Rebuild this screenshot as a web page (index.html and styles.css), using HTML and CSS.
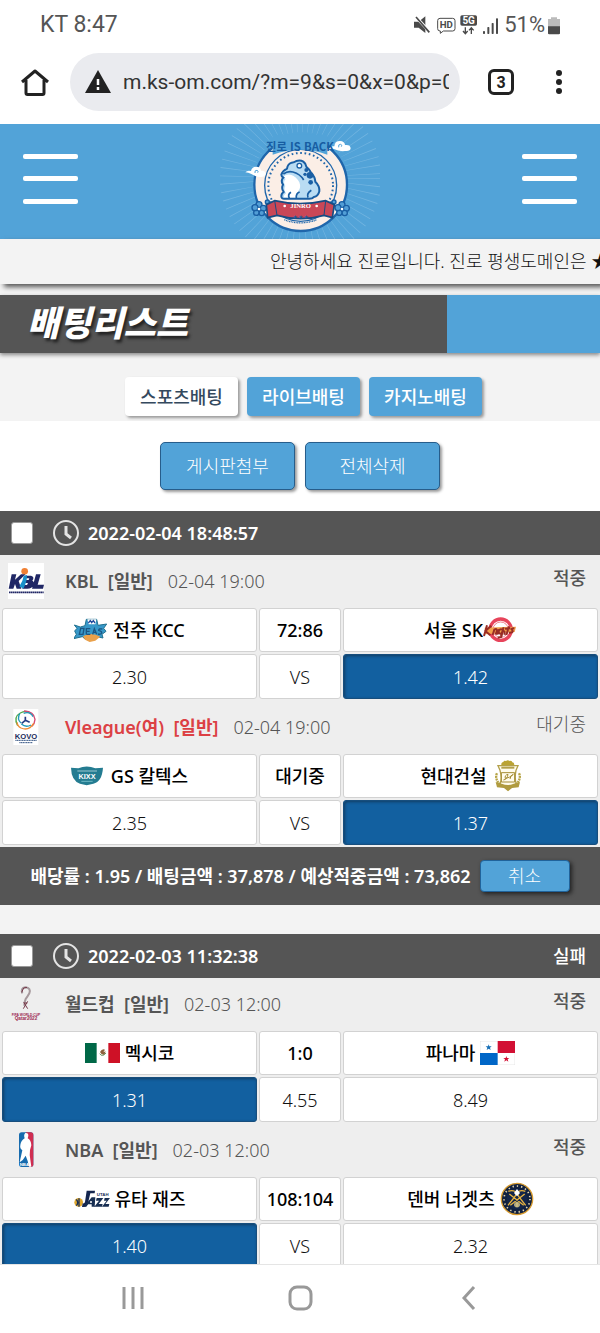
FILE: index.html
```
<!DOCTYPE html>
<html lang="ko">
<head>
  <meta charset="UTF-8">
  <title>배팅리스트</title>
  <meta name="viewport" content="width=device-width, initial-scale=1.0">
  <link rel="stylesheet" href="styles.css">
</head>
<body>
  <!-- 상태바 -->
  <div class="status-bar">
    <span>KT 8:47</span>
    <div class="status-icons">
      <svg width="88" height="20" viewBox="333 42 264 60">
        <g fill="#4a4a4a">
          <path d="M336 62h14l20-16v50l-20-16h-14z"/>
          <path d="M340 46l44 48" stroke="#fff" stroke-width="9"/>
          <path d="M342 48l40 46" stroke="#4a4a4a" stroke-width="5"/>
          <path d="M414 52h38q7 0 7 7v24q0 7-7 7h-28l-9 7v-7h-1q-7 0-7-7v-24q0-7 7-7z" fill="none" stroke="#4a4a4a" stroke-width="3"/>
          <rect x="475" y="43" width="50" height="31" rx="5"/>
          <path d="M490 79v18m-7-7l7 8 7-8M508 99v-18m-7 7l7-8 7 8" fill="none" stroke="#4a4a4a" stroke-width="4"/>
          <rect x="543" y="90" width="6" height="9" rx="2"/>
          <rect x="556" y="78" width="6" height="21" rx="2"/>
          <rect x="569" y="66" width="6" height="33" rx="2"/>
          <rect x="582" y="52" width="6" height="47" rx="2"/>
        </g>
        <text x="433" y="81" class="hd">HD</text>
        <text x="500" y="69" class="fiveg">5G</text>
      </svg>
      <span class="percent">51%</span>
      <svg width="12" height="19" viewBox="0 0 36 57">
        <path d="M9 4h18v5h9v45H0V9h9z" fill="#bbb"/>
        <path d="M0 31h36v20q0 4-4 4H4q-4 0-4-4z" fill="#4a4a4a"/>
      </svg>
    </div>
  </div>

  <!-- 브라우저 주소창 -->
  <div class="browser-bar">
    <button class="icon-btn" aria-label="홈">
      <svg width="28" height="28" viewBox="0 0 28 28" fill="none" stroke="#222" stroke-width="3" stroke-linejoin="round">
        <path d="M1 14L14 3l13 11M5 12v13q0 1.500 1.500 1.500h15q1.500 0 1.500-1.500V12"/>
      </svg>
    </button>
    <label class="address">
      <svg width="26" height="24" viewBox="0 0 26 24">
        <path d="M13 0l13 23H0z" fill="#222"/>
        <path d="M13 9v6M13 17v3" stroke="#fff" stroke-width="2.500"/>
      </svg>
      <input type="text" value="m.ks-om.com/?m=9&amp;s=0&amp;x=0&amp;p=0" aria-label="주소">
    </label>
    <button class="tab-count">3</button>
    <button class="icon-btn more" aria-label="메뉴">
      <svg width="8" height="26" viewBox="0 0 8 26" fill="#222"><circle cx="4" cy="4" r="3"/><circle cx="4" cy="13" r="3"/><circle cx="4" cy="22" r="3"/></svg>
    </button>
  </div>

  <main>
    <header>
      <button class="menu-btn" aria-label="왼쪽 메뉴"><i></i><i></i><i></i></button>
      <a href="#" class="logo" aria-label="진로 IS BACK">
        <svg width="160" height="115" viewBox="0 6 480 345">
          <circle cx="242" cy="168" r="190" fill="none" stroke="#86c0e6" stroke-width="105" stroke-dasharray="2 18" opacity=".6"/>
          <circle cx="242" cy="188" r="139" fill="#fbeee6" stroke="#1f66ab" stroke-width="7"/>
          <circle cx="242" cy="190" r="108" fill="#fbeee6" stroke="#1f66ab" stroke-width="4"/>
          <circle cx="242" cy="190" r="97" fill="none" stroke="#1f66ab" stroke-width="6" stroke-dasharray="5 8"/>
          <path d="M158 38h164v60q-80-30-164 0z" fill="#52a3d8"/>
          <g class="cloud">
            <path d="M326 80q4-9 17-7 1-16 17-16 14 1 15 12 16-2 17 10-1 10-17 8-19 2-33-6z"/>
            <path d="M76 151q6-7 17-4 2-13 16-13 13 0 14 12 14-1 14 10-2 9-15 9-13 0-28-9-9-5-18-5z"/>
            <path d="M356 76q-2-10 6-9 6 2 2 7M105 153q-2-9 6-8 6 2 2 7" fill="none" stroke="#52a3d8" stroke-width="3"/>
          </g>
          <!-- 두꺼비 -->
          <path d="M184 158q4-12 17-18 2-14 14-18 8-1 14-5 12-4 21 2 8 6 9 15 10 8 14 18 12 12 13 27 13 12 12 29-4 16-16 17-7 7-19 5h-69q-10 1-10-7 0-9 7-13-8-12-2-22-8-12 1-21-6-4-6-9z" fill="#b9dcf3"/>
          <path d="M190 165q10-10 24-6 14 4 24 22 6 16-3 26-7 8-6 20h-38q0-9 7-13-8-12-2-22-8-12 1-21z" fill="#fff"/>
          <path d="M184 158q4-12 17-18 2-14 14-18 8-1 14-5 12-4 21 2 8 6 9 15 10 8 14 18 12 12 13 27 13 12 12 29-4 16-16 17-7 7-19 5h-69q-10 1-10-7 0-9 7-13-8-12-2-22-8-12 1-21-6-4-6-9z" fill="none" stroke="#1a5fa4" stroke-width="6"/>
          <path d="M190 156q13-10 29-6 22 6 32 24M208 229q-6-12 5-18M229 229q-2-15 10-19M264 227q-5-13 10-22" fill="none" stroke="#1a5fa4" stroke-width="5"/>
          <g fill="#1a5fa4"><circle cx="259" cy="144" r="6"/><circle cx="270" cy="160" r="10"/><circle cx="272" cy="181" r="7"/><circle cx="255" cy="157" r="5"/></g>
          <circle cx="238" cy="131" r="7" fill="#fff" stroke="#1a5fa4" stroke-width="4"/>
          <g fill="#529ed6" stroke="#195ea3" stroke-width="4">
            <circle cx="117" cy="248" r="9"/><circle cx="130" cy="259" r="9"/><circle cx="125" cy="273" r="8"/><circle cx="109" cy="272" r="8"/><circle cx="105" cy="257" r="9"/><circle cx="151" cy="247" r="7"/><circle cx="142" cy="240" r="6"/>
            <circle cx="366" cy="248" r="9"/><circle cx="379" cy="259" r="9"/><circle cx="374" cy="273" r="8"/><circle cx="358" cy="272" r="8"/><circle cx="354" cy="257" r="9"/><circle cx="334" cy="247" r="7"/><circle cx="342" cy="240" r="6"/>
          </g>
          <circle cx="117" cy="261" r="4" fill="#fff"/><circle cx="366" cy="261" r="4" fill="#fff"/>
          <path d="M139 248l25-12q76 18 153 0l26 12-6 39-25-7q-70 20-141 0l-28 7z" fill="#c94757" stroke="#174c83" stroke-width="5"/>
          <path d="M164 236l7 44M317 236l-5 44" stroke="#174c83" stroke-width="3"/>
          <circle cx="194" cy="252" r="4" fill="#fff"/><circle cx="290" cy="252" r="4" fill="#fff"/>
          <text x="242" y="259" class="logo-ribbon">JINRO</text>
          <path d="M193 293q48 19 98 0" fill="none" stroke="#1f66ab" stroke-width="4" stroke-dasharray="3 2"/>
          <text x="242" y="288" class="logo-stars">★ ★ ★</text>
          <text x="240" y="86" class="logo-title">진로 IS BACK</text>
        </svg>
      </a>
      <button class="menu-btn" aria-label="오른쪽 메뉴"><i></i><i></i><i></i></button>
    </header>

    <div class="notice">안녕하세요 진로입니다. 진로 평생도메인은 ★</div>
    <div class="page-title"><h1>배팅리스트</h1></div>

    <nav class="tabs">
      <button class="active">스포츠배팅</button>
      <button>라이브배팅</button>
      <button>카지노배팅</button>
    </nav>
    <div class="actions">
      <button>게시판첨부</button>
      <button>전체삭제</button>
    </div>

    <!-- 배팅 1 -->
    <section class="bet">
      <div class="bet-head">
        <input type="checkbox" id="bet1">
        <label for="bet1">
          <svg width="28" height="28" viewBox="0 0 28 28" fill="none" stroke="#e4e4e4" stroke-width="2"><circle cx="14" cy="14" r="12"/><path d="M14 7v8l5 4" stroke-width="3"/></svg>
          2022-02-04 18:48:57
        </label>
      </div>
      <div class="league">
        <svg class="league-icon" width="36" height="36" viewBox="23 399 108 108">
          <path d="M23 399h108v108H23z" fill="#fff"/>
          <circle cx="73" cy="424" r="10" fill="#f08034"/>
          <path d="M34 433h14l-4 16 18-16h13l-20 20 8 23H49l-5-14-5 14H25zM71 437h21q12 3 4 15 8 4 2 15-4 9-17 9H66l3-11h11l3-6H68l2-9h15l2-5H75zM107 433h14l-9 31h19l-3 12h-33z" fill="#202765"/>
          <path d="M57 469q11-15 13-31l10-3q0 22-11 41z" fill="#1890c9"/>
          <path d="M26 487h104" stroke="#202765" stroke-width="5" stroke-dasharray="5 1"/>
        </svg>
        <b>KBL&nbsp; [일반]</b><time>02-04 19:00</time>
        <strong class="state">적중</strong>
      </div>
      <table>
        <colgroup><col><col class="mid"><col></colgroup>
        <tr>
          <th><span class="team">
            <svg width="34" height="24" viewBox="221 568 102 72">
              <path d="M222 589l18 6 14-4 4-19h31l4 18 26-4-9 13 7 9-12 9 3 11-26-6q-12 16-28 9l-8-7-26 6 8-13-5-10 7-8z" fill="#3798c9" stroke="#22718f" stroke-width="3"/>
              <path d="M248 623q25-14 52 1l-15 12-17 4-14-7z" fill="#eaa14b"/>
              <path d="M261 572h27l-3 15h-20z" fill="#fff"/><path d="M264 583l6-7 4 6 5-6 5 7" fill="none" stroke="#22499b" stroke-width="4"/>
              <path d="M237 617l4-18h10l-3 18zM258 617v-17h12m-12 8h10m-10 9h12M277 617l5-17 7 17m-9-6h6M306 601q-11-2-11 4 12 3 8 9-3 4-10 2" fill="none" stroke="#1c5683" stroke-width="4"/>
            </svg>전주 KCC</span></th>
          <th>72:86</th>
          <th><span class="team tight">서울 SK<svg width="34" height="26" viewBox="545 565 102 78">
              <circle cx="598" cy="603" r="32" fill="#fff" stroke="#e7445b" stroke-width="10"/><circle cx="598" cy="603" r="23" fill="none" stroke="#e7445b" stroke-width="2"/>
              <path d="M550 597l94-3-4 16-88 7z" fill="#f3a04c"/>
              <path d="M557 590l-9 32m22-31l-18 16 15 13m7-1l5-16q8-5 8 3l-4 12m10-16l-5 16m16-15q-11-4-12 7 3 9 11 2l-3 13-11 2m18-31l-8 27m1-10q13-13 9 5m14-25l-8 26m-4-19l16-1m12 0q-13 0-6 6 5 7-10 7" fill="none" stroke="#992c25" stroke-width="6"/>
            </svg></span></th>
        </tr>
        <tr><td>2.30</td><td>VS</td><td class="pick">1.42</td></tr>
      </table>
      <div class="league">
        <svg class="league-icon" width="36" height="36" viewBox="23 175 108 108">
          <path d="M39 175h75v108H39z" fill="#fff"/>
          <g fill="none" stroke-width="4">
            <path d="M52 225q-14-26 8-38 14-8 27-2" stroke="#54a94b"/><path d="M71 181q30 1 33 25-1 13-9 21" stroke="#d54972"/>
            <path d="M100 218q-14 24-38 14-11-6-12-17" stroke="#f08c35"/><path d="M58 189q-9 17 4 28m8-29q19-7 28 10m-6 25q-15 9-29-3" stroke="#219aba"/>
            <path d="M75 198v11l-11 9m11-9l13 6" stroke="#263d83" stroke-width="5"/>
          </g>
          <text x="77" y="264" class="kovo">KOVO</text>
          <path d="M45 269h65M57 276h40" stroke="#315181" stroke-width="3" stroke-dasharray="4 1"/>
        </svg>
        <b class="red">Vleague(여)&nbsp; [일반]</b><time>02-04 19:00</time>
        <span class="state">대기중</span>
      </div>
      <table>
        <colgroup><col><col class="mid"><col></colgroup>
        <tr>
          <th><span class="team wide">
            <svg width="32" height="20" viewBox="215 352 96 60">
              <path d="M215 357l22 2q25-11 51 0l23-2q-3 42-29 48l-20 5-20-5q-26-9-27-48z" fill="#247c91"/>
              <path d="M234 367h59" stroke="#d8eef1" stroke-width="2"/><text x="263" y="391" class="kixx">KIXX</text>
              <path d="M246 398h34" stroke="#6eb8c5" stroke-width="3"/>
            </svg>GS 칼텍스</span></th>
          <th>대기중</th>
          <th><span class="team wide">현대건설
            <svg width="26" height="32" viewBox="582 338 78 96">
              <path d="M601 355q-1-11 6-11 2-6 8-3 5-5 11 0 7-2 8 4 7 0 6 10z" fill="#baa334"/>
              <path d="M591 355h60l-6 14q-5 24 1 42l-25 15-24-15q7-18 0-42z" fill="#fffced" stroke="#b3a04a" stroke-width="4"/>
              <path d="M601 361h39" stroke="#b3a04a" stroke-width="6"/>
              <path d="M601 376h40v28h-40zM607 398q12-2 14-17-11 2-8 13 13-3 24-13-9 3-10 14" fill="none" stroke="#a58d35" stroke-width="3"/>
              <path d="M588 378q-8 16 9 33M654 378q8 16-9 33" fill="none" stroke="#b7a548" stroke-width="7" stroke-dasharray="6 2"/>
              <path d="M584 404l18 5q19 8 36 0l19-5-4 16-20 2-12 10-12-10-21-2z" fill="#b09b3f"/>
            </svg></span></th>
        </tr>
        <tr><td>2.35</td><td>VS</td><td class="pick">1.37</td></tr>
      </table>
      <div class="bet-foot">
        <span>배당률 : 1.95 / 배팅금액 : 37,878 / 예상적중금액 : 73,862</span>
        <button>취소</button>
      </div>
    </section>

    <!-- 배팅 2 -->
    <section class="bet">
      <div class="bet-head">
        <input type="checkbox" id="bet2">
        <label for="bet2">
          <svg width="28" height="28" viewBox="0 0 28 28" fill="none" stroke="#e4e4e4" stroke-width="2"><circle cx="14" cy="14" r="12"/><path d="M14 7v8l5 4" stroke-width="3"/></svg>
          2022-02-03 11:32:38
        </label>
        <strong class="result">실패</strong>
      </div>
      <div class="league">
        <svg class="league-icon" width="36" height="36" viewBox="23 184 108 108">
          <path d="M66 206q-6-16 9-18 18 2 12 18-6 11-11 17-4 9-4 20" fill="none" stroke="#a6999d" stroke-width="6"/>
          <path d="M64 203l6-13 10-2M70 233l12 19m0-22l-13 22m2-17h10" stroke="#763849" stroke-width="3" fill="none"/>
          <text x="77" y="273" class="fifa">FIFA WORLD CUP</text><text x="77" y="286" class="qatar">Qatar2022</text>
        </svg>
        <b>월드컵&nbsp; [일반]</b><time>02-03 12:00</time>
        <strong class="state">적중</strong>
      </div>
      <table>
        <colgroup><col><col class="mid"><col></colgroup>
        <tr>
          <th><span class="team">
            <svg width="35" height="20" viewBox="0 0 105 60"><path d="M0 0h105v60H0z" fill="#fff"/><path d="M0 0h35v60H0z" fill="#006847"/><path d="M70 0h35v60H70z" fill="#ce1126"/><path d="M45 27q6-11 15-7l-5 8 7-3-4 11-8-2z" fill="#8b603b"/><path d="M44 32q8 12 19-2" fill="none" stroke="#6d9a68" stroke-width="3"/></svg>멕시코</span></th>
          <th>1:0</th>
          <th><span class="team">파나마
            <svg width="35" height="24" viewBox="0 0 105 72"><path d="M0 0h105v72H0z" fill="#fff" stroke="#ddd" stroke-width="2"/><path d="M53 0h52v36H53z" fill="#d21034"/><path d="M0 36h53v36H0z" fill="#0066c7"/><path d="M26 10l2 6h7l-5 4 2 7-6-4-6 4 2-7-5-4h7z" fill="#176fb7"/><path d="M79 45l2 6h7l-5 4 2 7-6-4-6 4 2-7-5-4h7z" fill="#d21034"/></svg></span></th>
        </tr>
        <tr><td class="pick">1.31</td><td>4.55</td><td>8.49</td></tr>
      </table>
      <div class="league">
        <svg class="league-icon" width="36" height="36" viewBox="0 0 108 108">
          <rect x="33" y="1" width="43" height="104" rx="8" fill="#176bae"/><path d="M54 1h14q8 0 8 8v88q0 8-8 8h-5z" fill="#d02d50"/>
          <path d="M52 3q10-1 9 9l-2 7q10 5 11 21l-4 14q-2 15 1 29l3 21h-7q-3-18-10-33-8 15-18 20l8-36q-8-5-6-16 2-14 13-20-4-11 2-16z" fill="#fff"/>
          <text x="49" y="101" class="nba">NBA</text>
        </svg>
        <b>NBA&nbsp; [일반]</b><time>02-03 12:00</time>
        <strong class="state">적중</strong>
      </div>
      <table>
        <colgroup><col><col class="mid"><col></colgroup>
        <tr>
          <th><span class="team">
            <svg width="36" height="20" viewBox="0 0 108 60">
              <circle cx="14" cy="40" r="13" fill="#e0a82d"/><path d="M15 28v25M7 31q8 10 0 19" fill="none" stroke="#172e58" stroke-width="4"/>
              <path d="M38 5h25l-1 8H49l-7 30q-3 13-18 11l2-11q6 1 7-4z" fill="#14254e"/>
              <path d="M29 53l24-28h11l-2 28h-9v-7H42l-5 7zM68 27h20L74 45h12l-2 8H61l14-18H66zM92 27h16L94 45h12l-2 8H84l14-18h-8z" fill="#172e52"/>
              <path d="M48 39h6" stroke="#fff" stroke-width="4"/><text x="86" y="20" class="utah">UTAH</text>
            </svg>유타 재즈</span></th>
          <th>108:104</th>
          <th><span class="team">덴버 너겟츠
            <svg width="34" height="34" viewBox="0 0 102 102">
              <circle cx="51" cy="51" r="47" fill="#10203f" stroke="#d79b2f" stroke-width="4"/><circle cx="51" cy="51" r="39" fill="none" stroke="#e8d9ae" stroke-width="5" stroke-dasharray="4 9"/><circle cx="51" cy="51" r="31" fill="#132549"/>
              <path d="M25 28q22-9 32 17l20 25M76 28q-22-9-32 17L24 70M28 36l43 34M74 36L31 70" fill="none" stroke="#e8b441" stroke-width="4"/>
              <path d="M51 21l9 12-9 10-9-10z" fill="#fff"/><circle cx="51" cy="68" r="8" fill="#fff0af"/><path d="M51 60v16m-4-15v14m8-14v14" stroke="#786e48" stroke-width="2"/>
            </svg></span></th>
        </tr>
        <tr><td class="pick">1.40</td><td>VS</td><td>2.32</td></tr>
      </table>
    </section>
  </main>

  <!-- 하단 내비게이션 -->
  <nav class="phone-nav">
    <button aria-label="최근 앱"><svg width="28" height="28" viewBox="0 0 28 28" stroke="#999" stroke-width="3"><path d="M5 3v22M14 3v22M23 3v22"/></svg></button>
    <button aria-label="홈 화면"><svg width="28" height="28" viewBox="0 0 28 28" fill="none" stroke="#999" stroke-width="3"><rect x="4" y="3" width="21" height="22" rx="7"/></svg></button>
    <button aria-label="뒤로"><svg width="28" height="28" viewBox="0 0 28 28" fill="none" stroke="#999" stroke-width="3"><path d="M21 3L11 14l10 11"/></svg></button>
  </nav>
</body>
</html>
```

FILE: styles.css
```
* { box-sizing: border-box; }
body { margin: 0; height: 100vh; display: flex; flex-direction: column; overflow: hidden; background: #fff; color: #111; font-family: "Noto Sans", "Noto Sans CJK KR", sans-serif; font-size: 18px; line-height: 24px; }
button { font-family: inherit; font-size: 18px; line-height: 24px; padding: 0; border: 0; cursor: pointer; }
svg { display: block; flex: none; }

/* 상태바 */
.status-bar { flex: none; height: 50px; padding: 0 40px; display: flex; align-items: center; justify-content: space-between; font-family: Roboto, sans-serif; font-size: 23px; color: #555; }
.status-icons { display: flex; align-items: center; gap: 3px; }
.status-icons text { font-family: Roboto, sans-serif; fill: #4a4a4a; text-anchor: middle; }
.status-icons .hd { font-size: 29px; font-weight: bold; }
.status-icons .fiveg { font-size: 30px; font-weight: bold; fill: #fff; }
.percent { font-size: 22px; }

/* 주소창 */
.browser-bar { flex: none; height: 74px; padding: 3px 26px 13px 21px; display: flex; align-items: center; }
.icon-btn, .tab-count { background: none; flex: none; }
.address { flex: 1; min-width: 0; height: 58px; margin: 0 28px 0 21px; padding: 0 11px 0 15px; border-radius: 29px; background: #eaebef; display: flex; align-items: center; gap: 12px; }
.address input { flex: 1; min-width: 0; padding: 0; border: 0; outline: 0; background: none; color: #333; font: 21px Roboto, sans-serif; }
.tab-count { width: 26px; height: 26px; border: 3px solid #222; border-radius: 6px; font: bold 16px Roboto, sans-serif; color: #222; }
.more { width: 30px; margin-left: 30px; display: flex; justify-content: center; }

/* 상단 */
main { flex: 1; min-height: 0; overflow: hidden; background: #f3f3f3; }
header { height: 115px; padding: 0 23px; display: flex; justify-content: space-between; align-items: center; background: #52a3d8; }
.menu-btn { width: 55px; height: 50px; margin-bottom: 6px; background: none; display: flex; flex-direction: column; justify-content: space-between; }
.menu-btn i { width: 55px; height: 5px; border-radius: 2px; background: #fff; }
.logo text { text-anchor: middle; fill: #175da2; }
.logo .logo-title { font: bold 34px "Liberation Sans Narrow", "Noto Sans CJK KR", sans-serif; }
.logo .logo-ribbon { font: bold 20px "Liberation Serif", serif; fill: #fff; }
.logo .logo-stars { font-size: 13px; }
.cloud { fill: #fff; }
.notice { height: 45px; padding: 10px 0 0 45%; overflow: hidden; white-space: nowrap; font-weight: 300; box-shadow: 4px 3px 5px #555; }
.page-title { height: 58px; margin-top: 11px; padding-left: 27px; background: linear-gradient(90deg, #555 447px, #52a3d8 447px); box-shadow: 0 2px 4px #888; }
h1 { margin: 0; font: italic 900 35px/52px "Noto Sans CJK KR", sans-serif; color: #fff; text-shadow: 2px 3px 3px #222; }

.tabs { height: 68px; padding: 24px 0 0 7px; display: flex; justify-content: center; gap: 9px; }
.tabs button { width: 113px; height: 39px; border-radius: 4px; background: #52a3d8; color: #fff; font-weight: 500; box-shadow: 2px 2px 3px #999; }
.tabs .active { background: #fff; color: #34495e; }
.actions { height: 90px; padding-top: 21px; background: #fff; display: flex; justify-content: center; gap: 10px; }
.actions button { width: 135px; height: 48px; border: 1px solid #275d8b; border-radius: 5px; background: #52a3d8; color: #fff; font-weight: 300; box-shadow: 2px 2px 3px #999; }

/* 배팅 목록 */
.bet { margin-bottom: 29px; background: #eee; }
.bet-head { height: 44px; padding: 0 14px 0 11px; background: #555; color: #fff; display: flex; align-items: center; font-weight: 600; }
.bet-head input { appearance: none; width: 22px; height: 22px; margin: 0; border: 1px solid #999; border-radius: 3px; background: #fff; }
.bet-head label { margin-left: 19px; display: flex; align-items: center; gap: 8px; }
.result { margin-left: auto; font-weight: 500; }
.league { height: 51px; padding: 0 14px 0 8px; display: flex; align-items: center; color: #555; }
.league-icon { margin-right: 21px; }
.league b { font-weight: 600; }
.league b.red { color: #dc4044; }
.league time { margin-left: 15px; font-weight: 300; }
.state { margin-left: auto; align-self: flex-start; margin-top: 11px; font-weight: 300; }
.league strong { font-weight: 500; }

table { width: 100%; table-layout: fixed; border-collapse: separate; border-spacing: 2px; background: #eee; }
.mid { width: 82px; }
th, td { height: 44px; padding: 0; border: 1px solid #d2d2d2; border-radius: 3px; background: #fff; text-align: center; font-weight: 500; white-space: nowrap; }
th { color: #000; }
td { height: 45px; font-weight: 300; }
td.pick { background: #1260a0; border-color: #174e7d; color: #fff; box-shadow: inset 1px 1px 3px #123d63; }
.team { display: flex; align-items: center; justify-content: center; gap: 5px; }
.team.tight { gap: 0; }
.team.wide { gap: 8px; }
.bet-foot { min-height: 58px; background: #555; color: #fff; display: flex; align-items: center; justify-content: center; gap: 9px; font-weight: 600; }
.bet-foot button { width: 90px; height: 32px; border: 1px solid #20639b; border-radius: 4px; background: #52a3d8; color: #fff; font-weight: 300; box-shadow: 2px 2px 4px #222; }

/* 로고 안의 글자 */
table text, .league text { text-anchor: middle; font-family: "Liberation Sans", sans-serif; font-weight: bold; }
.kovo { font-size: 23px; fill: #222e5d; }
.kixx { font-size: 22px; fill: #fff; }
.fifa { font-size: 10px; fill: #9b254d; }
.qatar { font-size: 14px; fill: #9b254d; }
.nba { font-size: 13px; fill: #fff; }
.utah { font-size: 13px; fill: #172e58; }

.phone-nav { flex: none; height: 69px; padding: 0 50px 3px; border-top: 1px solid #e5e5e5; background: #fff; display: flex; align-items: center; justify-content: space-around; }
.phone-nav button { background: none; }
```
